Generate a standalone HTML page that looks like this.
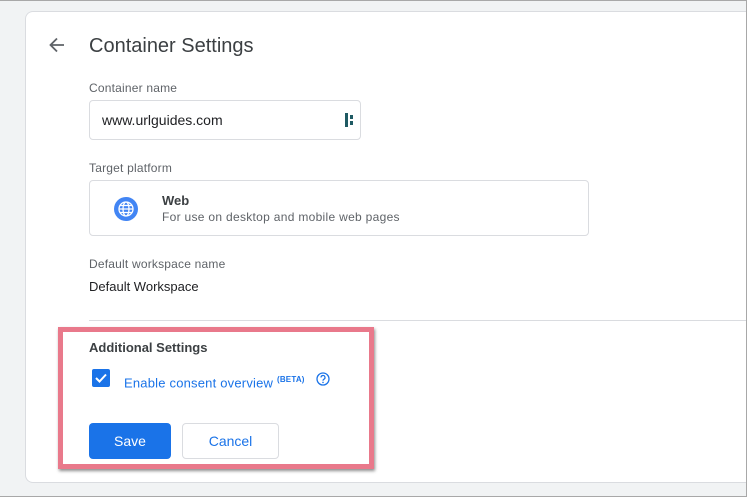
<!DOCTYPE html>
<html><head><style>
*{margin:0;padding:0;box-sizing:border-box}
body{width:747px;height:497px;overflow:hidden;background:#f1f3f4;font-family:"Liberation Sans",Arial,sans-serif;position:relative}
.frame{position:absolute;left:0;top:0;width:747px;height:497px;border:1px solid #a8a8a8;border-left:none;pointer-events:none}
.card{position:absolute;left:25px;top:11px;width:722px;height:472px;background:#fff;border:1px solid #dadce0;border-right:none;border-radius:8px 0 0 8px}
.a{position:absolute;white-space:nowrap}
.lbl{font-size:12px;color:#5f6368;letter-spacing:0.2px}
</style></head><body>
<div class="card"></div>
<svg class="a" style="left:47px;top:35px" width="20" height="20" viewBox="0 0 20 20"><path d="M17 10H4M10 3.5L3.5 10 10 16.5" stroke="#5f6368" stroke-width="1.8" fill="none"/></svg>
<div class="a" style="left:89px;top:35px;font-size:20px;color:#3c4043">Container Settings</div>
<div class="a lbl" style="left:89px;top:81px">Container name</div>
<div class="a" style="left:89px;top:100px;width:272px;height:40px;border:1px solid #dadce0;border-radius:4px"></div>
<div class="a" style="left:102px;top:112px;font-size:14px;color:#202124">www.urlguides.com</div>
<div class="a" style="left:345px;top:113px;width:3px;height:14px;background:#1f5a63"></div>
<div class="a" style="left:350px;top:115px;width:3px;height:4px;background:#1f5a63"></div>
<div class="a" style="left:350px;top:121px;width:3px;height:4px;background:#1f5a63"></div>
<div class="a lbl" style="left:89px;top:161px">Target platform</div>
<div class="a" style="left:89px;top:180px;width:500px;height:56px;border:1px solid #dadce0;border-radius:4px"></div>
<svg class="a" style="left:114px;top:197px" width="24" height="24" viewBox="0 0 24 24"><circle cx="12" cy="12" r="12" fill="#4285f4"/><g stroke="#fff" stroke-width="1.3" fill="none"><circle cx="12" cy="12" r="7"/><ellipse cx="12" cy="12" rx="3" ry="7"/><path d="M5 12h14M6 8.5h12M6 15.5h12"/></g></svg>
<div class="a" style="left:162px;top:193px;font-size:13px;font-weight:bold;color:#3c4043">Web</div>
<div class="a" style="left:162px;top:210px;font-size:12px;color:#5f6368;letter-spacing:0.3px">For use on desktop and mobile web pages</div>
<div class="a lbl" style="left:89px;top:257px">Default workspace name</div>
<div class="a" style="left:89px;top:279px;font-size:13px;color:#202124">Default Workspace</div>
<div class="a" style="left:89px;top:320px;width:658px;height:1px;background:#dadce0"></div>
<div class="a" style="left:58px;top:327px;width:316px;height:142px;border:5px solid #e9798b;box-shadow:1px 2px 3px rgba(0,0,0,.45)"></div>
<div class="a" style="left:89px;top:340px;font-size:13px;font-weight:bold;color:#3c4043">Additional Settings</div>
<div class="a" style="left:92px;top:369px;width:18px;height:18px;background:#1a73e8;border-radius:2px"></div>
<svg class="a" style="left:92px;top:369px" width="18" height="18" viewBox="0 0 18 18"><path d="M4 9l3.5 3.5L14 5.5" stroke="#fff" stroke-width="2" fill="none"/></svg>
<div class="a" style="left:124px;top:375px;font-size:13px;color:#1a73e8;letter-spacing:0.2px">Enable consent overview <sup style="font-size:8px;font-weight:bold">(BETA)</sup></div>
<svg class="a" style="left:316px;top:372px" width="14" height="14" viewBox="0 0 14 14"><circle cx="7" cy="7" r="6" stroke="#1a73e8" stroke-width="1.3" fill="none"/><path d="M5 5.5a2 2 0 1 1 2.8 1.8C7.2 7.6 7 8 7 8.8" stroke="#1a73e8" stroke-width="1.2" fill="none"/><circle cx="7" cy="10.4" r=".8" fill="#1a73e8"/></svg>
<div class="a" style="left:89px;top:423px;width:82px;height:36px;background:#1a73e8;border-radius:4px;color:#fff;font-size:14px;text-align:center;line-height:37px">Save</div>
<div class="a" style="left:182px;top:423px;width:97px;height:36px;border:1px solid #dadce0;border-radius:4px;color:#1a73e8;font-size:14px;text-align:center;line-height:35px">Cancel</div>
<div class="frame"></div>
</body></html>
